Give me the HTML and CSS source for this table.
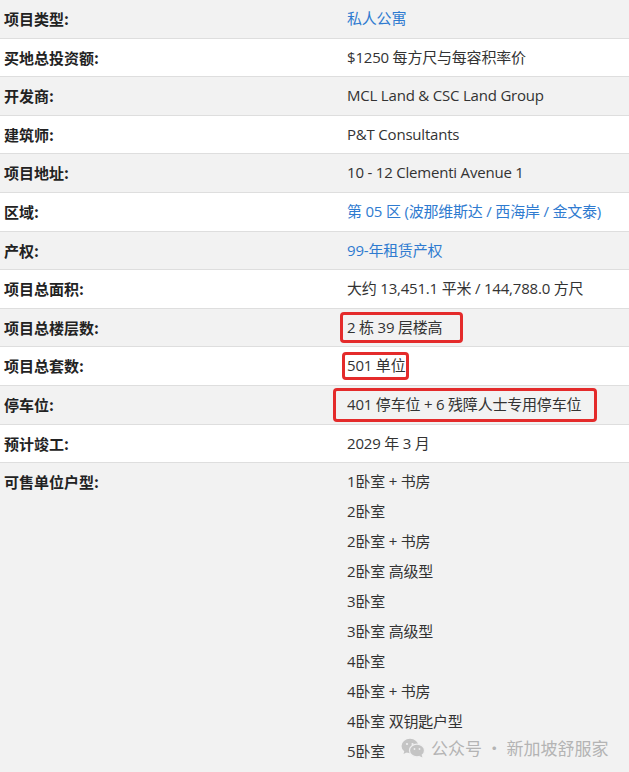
FILE: index.html
```html
<!DOCTYPE html>
<html lang="zh">
<head>
<meta charset="utf-8">
<title>项目信息</title>
<link rel="stylesheet" href="styles.css">
</head>
<body>
<div class="page">
<table class="info">
  <tbody>
    <tr class="odd first"><th>项目类型:</th><td><a class="link">私人公寓</a></td></tr>
    <tr><th>买地总投资额:</th><td>$1250 每方尺与每容积率价</td></tr>
    <tr class="odd"><th>开发商:</th><td>MCL Land &amp; CSC Land Group</td></tr>
    <tr><th>建筑师:</th><td>P&amp;T Consultants</td></tr>
    <tr class="odd"><th>项目地址:</th><td>10 - 12 Clementi Avenue 1</td></tr>
    <tr><th>区域:</th><td><a class="link">第 05 区 (波那维斯达 / 西海岸 / 金文泰)</a></td></tr>
    <tr class="odd"><th>产权:</th><td><a class="link">99-年租赁产权</a></td></tr>
    <tr><th>项目总面积:</th><td>大约 13,451.1 平米 / 144,788.0 方尺</td></tr>
    <tr class="odd"><th>项目总楼层数:</th><td><span class="hl hl-floors">2 栋 39 层楼高</span></td></tr>
    <tr><th>项目总套数:</th><td><span class="hl hl-units">501 单位</span></td></tr>
    <tr class="odd"><th>停车位:</th><td><span class="hl hl-park">401 停车位 + 6 残障人士专用停车位</span></td></tr>
    <tr><th>预计竣工:</th><td>2029 年 3 月</td></tr>
    <tr class="odd last"><th>可售单位户型:</th><td class="list-cell">
      <ul class="types">
        <li>1卧室 + 书房</li>
        <li>2卧室</li>
        <li>2卧室 + 书房</li>
        <li>2卧室 高级型</li>
        <li>3卧室</li>
        <li>3卧室 高级型</li>
        <li>4卧室</li>
        <li>4卧室 + 书房</li>
        <li>4卧室 双钥匙户型</li>
        <li>5卧室</li>
      </ul>
    </td></tr>
  </tbody>
</table>
<div class="watermark">
  <svg class="wx" width="24" height="20" viewBox="0 0 24 20">
    <ellipse cx="9" cy="8" rx="8.5" ry="7.2" fill="#c4c4c4"/>
    <path d="M3.5 12.5 L2.5 16 L6.5 14 Z" fill="#c4c4c4"/>
    <ellipse cx="16" cy="12.5" rx="7.5" ry="6.3" fill="#c4c4c4" stroke="#efeff0" stroke-width="1.2"/>
    <path d="M20.5 16.5 L21.5 19.5 L18 17.8 Z" fill="#c4c4c4"/>
    <circle cx="6" cy="6" r="1.1" fill="#efeff0"/>
    <circle cx="11.5" cy="6" r="1.1" fill="#efeff0"/>
    <circle cx="13.5" cy="11" r="0.9" fill="#efeff0"/>
    <circle cx="18.5" cy="11" r="0.9" fill="#efeff0"/>
  </svg>
  <span>公众号 · 新加坡舒服家</span>
</div>
</div>
</body>
</html>
```
FILE: styles.css
```css
html, body {
  margin: 0;
  padding: 0;
  background: #ffffff;
}
.page {
  position: relative;
  width: 629px;
  height: 772px;
  overflow: hidden;
  background: #efeff0;
}
.info {
  width: 100%;
  border-collapse: collapse;
  font-family: "Open Sans", "Noto Sans CJK SC", sans-serif;
  font-size: 15px;
  background: #fff;
}
.info tr {
  border-top: 1px solid #dedede;
}
.info tr.first {
  border-top: 0;
}
.info tr.odd {
  background: #f2f2f2;
}
.info th, .info td {
  padding: 9px 4px;
  line-height: 19.6px;
  vertical-align: top;
  text-align: left;
}
.info th {
  width: 335px;
  font-weight: 700;
  color: #222;
  font-family: "Noto Sans CJK SC", sans-serif;
}
.info td {
  color: #333;
  padding-left: 4px;
  letter-spacing: -0.2px;
}
.link {
  color: #2f7bd0;
  text-decoration: none;
}
.hl {
  display: inline-block;
  border: 3px solid #e42b2b;
  border-radius: 4px;
}
.hl-floors {
  padding: 3px 18px 3px 4px;
  margin: -6px -21px -6px -7px;
}
.hl-units {
  padding: 1px 1px 1px 2px;
  margin: -4px -4px -4px -5px;
}
.hl-park {
  padding: 4px 13px 4px 11px;
  margin: -7px -16px -7px -14px;
}
.info tr.last td.list-cell {
  padding-top: 3px;
  padding-bottom: 40px;
}
.types {
  list-style: none;
  margin: 0;
  padding: 0;
}
.types li {
  line-height: 30px;
}
.watermark {
  position: absolute;
  left: 401px;
  top: 735px;
  display: flex;
  align-items: center;
  gap: 6px;
  font-family: "Noto Sans CJK SC", sans-serif;
  font-size: 17px;
  color: #b4b4b4;
}
```
